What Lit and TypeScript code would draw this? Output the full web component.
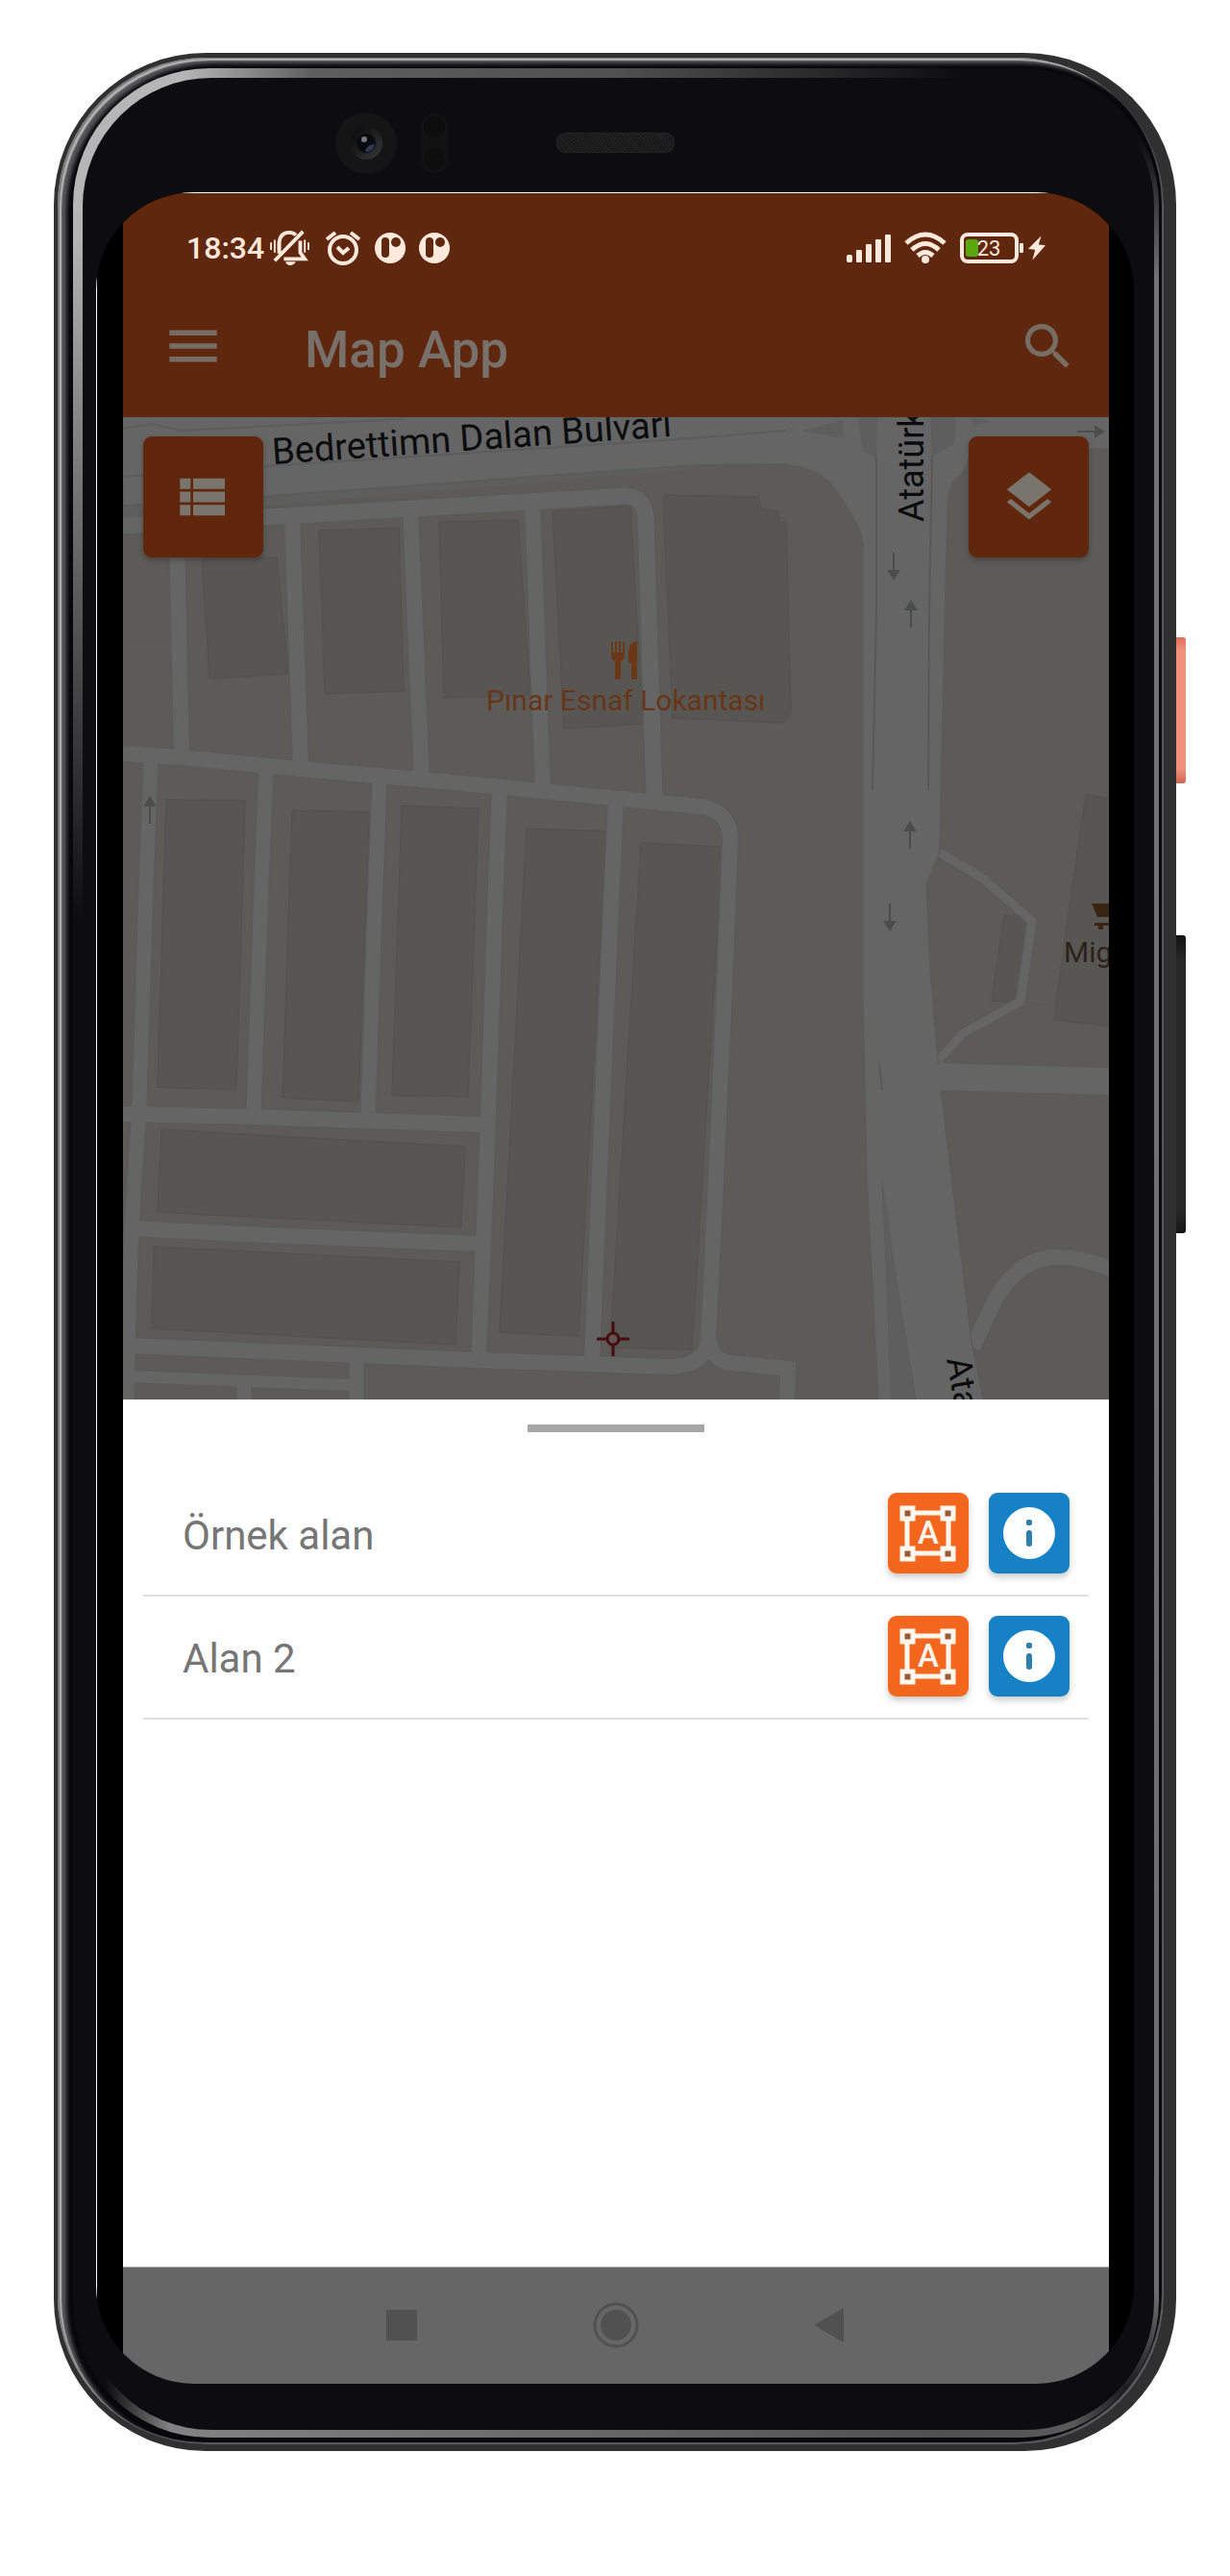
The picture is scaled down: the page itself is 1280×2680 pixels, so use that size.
import { LitElement, html, svg, css } from "lit";
import { customElement, property } from "lit/decorators.js";

/** Road centre lines, as [path, width]. */
const ROADS: [string, number][] = [
  ["M0 113L149 104L522 82Q542 82 544 104L553 398", 17],
  ["M56 120L61 354", 16],
  ["M176 104L185 366", 16],
  ["M299 96L311 377", 16],
  ["M426 88L437 389", 16],
  ["M0 350L61 354L185 366L311 377L437 389L600 405Q632 409 632 440L626 593L618 772L609 960Q607 986 570 988L367 981L7 966", 16],
  ["M609 955Q611 982 634 984L692 990L691 1030", 16],
  ["M29 358L24 486L17 715L9 843L6 930L4 1030", 15],
  ["M149 366L144 486L136 722", 15],
  ["M267 375L263 486L255 726", 15],
  ["M392 388L388 486L380 729L375 861L370 980", 16],
  ["M513 398L509 486L501 665L488 982", 16],
  ["M0 725L134 728L375 736", 16],
  ["M10 844L150 851L370 860", 16],
  ["M5 998L236 1007", 12],
  ["M243 980L243 1030", 15],
  ["M126 1008L126 1030", 15],
  ["M846 451L892 478L946 524L934 608L874 641L846 672", 9],
  ["M884 968L909 915Q932 880 960 875T1030 887", 16],
  ["M846 686L1030 691", 28],
];

const BLOCKS = [
  "82,146 160,146 172,267 90,272",
  "204,118 287,115 292,285 210,288",
  "329,109 411,107 424,289 334,292",
  "447,98 528,92 541,319 459,324",
  "562,81 661,83 664,95 682,98 683,109 690,110 695,306 688,318 572,313",
  "45,398 127,399 118,700 36,697",
  "176,409 256,411 245,712 166,708",
  "290,404 370,407 359,707 280,706",
  "420,428 503,431 474,956 392,952",
  "539,443 624,447 592,970 507,968",
  "40,741 356,759 352,843 36,827",
  "32,863 350,879 346,965 30,948",
  "1002,393 1030,397 1030,634 969,627 982,530",
  "917,518 946,522 933,609 904,607",
];

const ARROWS: [number, number, number][] = [
  [802, 155, 180],
  [820, 205, 0],
  [819, 435, 0],
  [798, 520, 180],
  [28, 409, 0],
  [1007, 15, 90],
];

@customElement("city-map")
class CityMap extends LitElement {
  static styles = css`
    :host {
      display: block;
    }
    svg {
      display: block;
      width: 100%;
      height: auto;
      font-family: Roboto, "Liberation Sans", sans-serif;
    }
    .land {
      fill: #5c5b58;
    }
    .block {
      fill: #575653;
      stroke: #545350;
      stroke-width: 1.5;
    }
    .casing {
      fill: none;
      stroke: #595a5a;
    }
    .road {
      fill: none;
      stroke: #656565;
    }
    .area {
      fill: #656565;
      stroke: #5a5b5b;
      stroke-width: 1.5;
    }
    .verge {
      fill: #5d5e5d;
    }
    .line {
      fill: none;
      stroke: #575858;
      stroke-width: 2;
    }
    .arrow {
      fill: #4b4c4c;
      stroke: #4b4c4c;
      stroke-width: 2;
    }
    .street {
      fill: #0b0c0d;
      font-size: 38px;
    }
    .avenue {
      fill: #0b0c0d;
      font-size: 36px;
    }
    .food {
      fill: #673618;
      font-size: 30px;
    }
    .shop {
      fill: #2b231b;
      font-size: 30px;
    }
  `;

  render() {
    return html`<svg viewBox="0 0 1026 1022" role="img" aria-label="Map">
      <rect class="land" width="1026" height="1022" />
      ${BLOCKS.map((b) => svg`<polygon class="block" points=${b} />`)}
      ${ROADS.map(([d, w]) => svg`<path class="casing" d=${d} stroke-width=${w + 3} />`)}
      ${ROADS.map(([d, w]) => svg`<path class="road" d=${d} stroke-width=${w} />`)}

      <path class="verge" d="M0 84L592 44V54L149 92L0 104Z" />
      <path
        class="area"
        d="M-2 -2H1028V33H882Q880 56 865 66Q858 80 858 96L852 353L850 453L836 486L840 575L847 657L852 707L883 961L896 1024H825L806 907L795 836L790 800L793 850L800 1024H786L774 790L770 611V133Q768 112 740 74Q725 50 679 49L592 50L149 82L0 92Z"
      />
      <rect x="836" y="674" width="18" height="25" fill="#656565" />
      <path class="verge" d="M765 0H785L784 42L770 36ZM840 0H867L865 28L842 41ZM706 14L749 3V22ZM884 0L904 5L884 9Z" />
      <path class="verge" d="M790 790L793 850L799 1022H825L806 907L797 836Z" />
      <path class="line" d="M0 12L30 7L60 14L290 2M0 62L150 51L592 22L690 14" opacity=".7" />
      <path class="line" d="M784 40V200L780 388M842 40L839 200L838 388M787 672L790 700" />
      <path class="line" d="M950 523L982 530M936 609L969 614M0 244H50" opacity=".5" />

      ${ARROWS.map(
        ([x, y, r]) => svg`<path class="arrow" transform="translate(${x} ${y}) rotate(${r})"
          d="M0 14V-6M-5 -5L0 -13L5 -5Z" />`,
      )}

      <text class="street" transform="translate(156 49) rotate(-4)">Bedrettimn Dalan Bulvarı</text>
      <text class="avenue" transform="translate(833 109) rotate(-90)">Atatürk</text>
      <text class="avenue" transform="translate(857 980) rotate(80)">Ata</text>

      <path
        fill="#6b3716"
        d="M508 234h2v11h2v-12h2v12h2v-12h2v12h2v-11h2v13q0 5-4 7v17q0 2-3 2t-3-2v-17q-4-2-4-7ZM535 233v38q0 2-3 2t-3-2v-15h-3v-11q0-11 9-12Z"
      />
      <text class="food" x="378" y="305">Pınar Esnaf Lokantası</text>

      <path
        fill="#3a2412"
        d="M1008 506h30v14h-24ZM1011 526h30v3h-30ZM1015 528h5v5h-5Z"
      />
      <text class="shop" x="979" y="567">Mig</text>

      <g fill="none" stroke="#470c10" stroke-width="3">
        <circle cx="510" cy="959" r="6" fill="#625454" />
        <path d="M510 941v12M510 965v12M493 959h11M516 959h11" />
      </g>
    </svg>`;
  }
}

@customElement("area-row")
class AreaRow extends LitElement {
  @property() name = "";

  static styles = css`
    :host {
      display: flex;
      align-items: center;
      gap: 21px;
      padding: 20px 20px 22px 41px;
      border-bottom: 2px solid #e0e0e0;
    }
    .name {
      flex: 1;
      padding-top: 6px;
      color: #767676;
      font-size: 42px;
      line-height: 48px;
    }
    button {
      display: block;
      width: 84px;
      height: 84px;
      padding: 0;
      border: 0;
      border-radius: 9px;
      box-shadow: 0 4px 6px rgba(0, 0, 0, 0.2);
    }
    svg {
      display: block;
      width: 100%;
      height: 100%;
    }
    .shape {
      background: #f3661e;
    }
    .info {
      background: #1681c4;
    }
    .glyph {
      fill: #fff6ee;
      font: 500 33px Roboto, sans-serif;
    }
  `;

  render() {
    return html`
      <span class="name">${this.name}</span>
      <button class="shape" aria-label="Show ${this.name}">
        <svg viewBox="0 0 84 84">
          <g fill="none" stroke="#fff6ee" stroke-width="5">
            <path d="M20 21H63V63H20Z" />
          </g>
          <g fill="#9a5a38" stroke="#fff6ee" stroke-width="5">
            <path d="M15 16h11v11h-11ZM57 16h11v11h-11ZM15 58h11v11h-11ZM57 58h11v11h-11Z" />
          </g>
          <text class="glyph" x="42" y="53" text-anchor="middle">A</text>
        </svg>
      </button>
      <button class="info" aria-label="About ${this.name}">
        <svg viewBox="0 0 84 84">
          <circle cx="42" cy="42" r="27" fill="#fdfffe" />
          <g fill="#2d7fab">
            <rect x="39" y="28" width="6" height="6" rx="2" />
            <rect x="39" y="39" width="6" height="17" rx="3" />
          </g>
        </svg>
      </button>
    `;
  }
}

@customElement("app-root")
class AppRoot extends LitElement {
  static styles = css`
    :host {
      display: flex;
      box-sizing: border-box;
      min-height: 100vh;
      padding: 55px 46px 130px 56px;
      background: #fff;
      font-family: Roboto, "Liberation Sans", sans-serif;
    }
    svg {
      display: block;
      flex: none;
    }
    button {
      padding: 0;
      border: 0;
      background: none;
      color: inherit;
    }

    /* handset shell, from the outside in */
    .shell {
      flex: 1;
      display: flex;
      padding: 5px 13px 7px 4px;
      border-radius: 158px;
      background: #303030;
    }
    .rim {
      flex: 1;
      display: flex;
      padding: 11px 5px 7px 16px;
      border-radius: 154px;
      background: #08080a;
      box-shadow:
        inset 2px 1px 0 #7c7c7c,
        inset 4px 3px 1px #b2b2b2,
        inset 9px 6px 4px #59595b,
        inset -2px -2px 1px #5c5d5e;
    }
    .ring {
      flex: 1;
      display: flex;
      padding: 10px 5px 8px 10px;
      border-radius: 142px;
      background:
        linear-gradient(90deg, #b6b6b6 0 10%, #5e5e5e 22%, #505050 50%, #0d0d0f 82%, transparent 90%) top / 100% 150px no-repeat,
        linear-gradient(90deg, #0d0d0f 3%, #828282 9%, #747474 30%, #505050 80%, #5a5a5a 92%, transparent 97%) bottom / 100% 150px no-repeat,
        linear-gradient(180deg, #b4b4b4 7%, #8a8a8a 14%, #0d0d0f 36%) left / 50% 100% no-repeat,
        linear-gradient(180deg, #0d0d0f 3%, #747474 9%, #6c6c6c 94%, #1c1c1e 98%) right / 50% 100% no-repeat;
    }
    .face {
      flex: 1;
      display: flex;
      flex-direction: column;
      padding: 0 21px 48px 14px;
      border-radius: 134px;
      background: #0d0d0f;
    }
    .sensors {
      display: grid;
      grid-template-columns: 1fr auto 1fr;
      align-items: center;
      height: 119px;
      box-sizing: border-box;
      padding-top: 16px;
    }
    .lenses {
      display: flex;
      align-items: center;
      justify-content: flex-end;
      gap: 25px;
      padding-right: 113px;
    }
    .speaker {
      width: 123px;
      height: 21px;
      border-radius: 9px;
      background: repeating-linear-gradient(45deg, #1a1a1a 0 2px, #222 2px 3px);
      box-shadow: inset 0 0 1px 1px #262626;
    }
    .glass {
      flex: 1;
      display: flex;
      overflow: hidden;
      padding: 1px 26px 0 28px;
      border-radius: 102px;
      background:
        linear-gradient(#fff, #fff) top / 100% 1px no-repeat,
        linear-gradient(#fff, #fff) left / 1px 100% no-repeat,
        #000;
    }
    .keys {
      display: flex;
      flex-direction: column;
      gap: 158px;
      width: 10px;
      padding-top: 608px;
    }
    .power,
    .volume {
      border-radius: 0 3px 3px 0;
    }
    .power {
      height: 152px;
      background: linear-gradient(#e0705a, #f0917b 9% 90%, #d0644e);
    }
    .volume {
      height: 310px;
      background: linear-gradient(#141414, #282828 9% 92%, #161616);
    }

    /* app */
    .app {
      flex: 1;
      min-width: 0;
      display: flex;
      flex-direction: column;
    }
    header {
      background: #5f270e;
    }
    .status {
      display: flex;
      align-items: center;
      justify-content: space-between;
      height: 114px;
      padding: 0 66px;
      color: #ffe9dd;
    }
    .group {
      display: flex;
      align-items: center;
      gap: 14px;
    }
    .tight {
      gap: 5px;
    }
    .time {
      font-size: 32px;
      font-weight: 500;
      line-height: 38px;
    }
    .bar {
      display: flex;
      align-items: center;
      height: 90px;
      padding: 0 32px 29px 40px;
      color: #776d64;
    }
    h1 {
      flex: 1;
      margin: 0 0 0 83px;
      padding-top: 8px;
      font-size: 53px;
      font-weight: 500;
      line-height: 60px;
      color: #77706b;
    }
    .map {
      position: relative;
    }
    .tool {
      position: absolute;
      top: 20px;
      display: grid;
      place-items: center;
      width: 125px;
      height: 126px;
      border-radius: 9px;
      background: #60270d;
      color: #7a756c;
      box-shadow: 0 3px 5px rgba(40, 30, 20, 0.35);
    }
    .list {
      left: 21px;
    }
    .layers {
      right: 21px;
    }
    .sheet {
      flex: 1;
      padding: 26px 21px;
      background: #fefefe;
    }
    .handle {
      width: 184px;
      height: 8px;
      margin: 0 auto 43px;
      background: #a6a6a6;
    }
    nav {
      display: flex;
      align-items: center;
      justify-content: center;
      gap: 159px;
      height: 122px;
      background: #666;
      box-shadow: inset 0 1px 0 #b5b5b5;
      color: #515151;
    }
  `;

  private badge() {
    return html`<svg width="32" height="34" viewBox="0 0 32 34">
      <ellipse cx="16" cy="17" rx="16" ry="16" fill="currentColor" />
      <rect x="7" y="6" width="8" height="21" rx="4" fill="#5f270e" />
      <circle cx="22" cy="11" r="5" fill="#5f270e" />
    </svg>`;
  }

  render() {
    return html`
      <div class="shell">
        <div class="rim">
          <div class="ring">
            <div class="face">
              <div class="sensors">
                <div class="lenses">
                  <svg width="64" height="64" viewBox="0 0 64 64">
                    <defs>
                      <linearGradient id="lens" x1="0" y1="0" x2="1" y2="1">
                        <stop offset=".2" stop-color="#101010" />
                        <stop offset="1" stop-color="#38393c" />
                      </linearGradient>
                    </defs>
                    <circle cx="32" cy="32" r="32" fill="#151515" />
                    <circle cx="32" cy="32" r="17" fill="url(#lens)" />
                    <circle cx="32" cy="32" r="10" fill="#0a0b10" />
                    <path d="M31 41Q33 33 41 33Q40 41 31 41Z" fill="#303a58" />
                    <circle cx="30" cy="28" r="3" fill="#77777b" />
                  </svg>
                  <svg width="28" height="62" viewBox="0 0 28 62">
                    <rect width="28" height="62" rx="14" fill="#121212" />
                    <circle cx="14" cy="14" r="11" fill="#0e0e0f" />
                    <circle cx="14" cy="48" r="11" fill="#0e0e0f" />
                  </svg>
                </div>
                <div class="speaker"></div>
              </div>
              <div class="glass">${this.app()}</div>
            </div>
          </div>
        </div>
      </div>
      <div class="keys">
        <div class="power"></div>
        <div class="volume"></div>
      </div>
    `;
  }

  private app() {
    return html`<div class="app">
      <header>
        <div class="status">
          <div class="group">
            <div class="group tight">
              <span class="time">18:34</span>
              <svg width="44" height="38" viewBox="0 0 46 40" fill="none" stroke="currentColor" stroke-width="4">
                <path d="M11 26V14Q12 3 22 3Q27 3 29 6M6 34L37 2M34 12V25L39 32H16" />
                <path d="M2 14v8M6 11v14M10 13v9M39 11v14M43 14v8" stroke-width="2" />
                <path d="M18 35h11q-2 4-6 4t-5-4Z" fill="currentColor" stroke="none" />
              </svg>
            </div>
            <svg width="38" height="38" viewBox="0 0 38 38" fill="none" stroke="currentColor" stroke-width="4">
              <circle cx="19" cy="21" r="14" />
              <path d="M2 10L11 3M36 10L27 3" />
              <path d="M13 18L19 24L25 19" />
            </svg>
            ${this.badge()} ${this.badge()}
          </div>
          <div class="group">
            <svg width="46" height="30" viewBox="0 0 46 30" fill="currentColor">
              <rect y="22" width="6" height="8" rx="2" />
              <rect x="10" y="17" width="6" height="13" rx="1" />
              <rect x="20" y="11" width="6" height="19" rx="1" />
              <rect x="30" y="6" width="6" height="24" rx="1" />
              <rect x="40" y="1" width="6" height="29" rx="1" />
            </svg>
            <svg width="44" height="34" viewBox="0 0 44 34" fill="none" stroke="currentColor" stroke-width="5">
              <path d="M2 12Q22 -6 42 12M8 19Q22 6 36 19M14 25Q22 18 30 25" />
              <circle cx="22" cy="29" r="4" fill="currentColor" stroke="none" />
            </svg>
            <div class="group tight">
              <svg width="66" height="32" viewBox="0 0 66 32">
                <rect x="2" y="2" width="57" height="28" rx="6" fill="none" stroke="currentColor" stroke-width="4" />
                <rect x="6" y="7" width="13" height="18" rx="3" fill="#5aa80e" />
                <rect x="62" y="11" width="4" height="10" rx="1" fill="currentColor" />
                <text x="30" y="24" text-anchor="middle" font-size="22" fill="currentColor">23</text>
              </svg>
              <svg width="18" height="28" viewBox="0 0 20 28" fill="currentColor">
                <path d="M15 0L0 15L8 16L5 28L20 11L12 10Z" />
              </svg>
            </div>
          </div>
        </div>
        <div class="bar">
          <button aria-label="Menu">
            <svg width="66" height="66" viewBox="0 0 24 24" fill="currentColor">
              <path d="M3 18h18v-2H3v2zm0-5h18v-2H3v2zm0-7v2h18V6H3z" />
            </svg>
          </button>
          <h1>Map App</h1>
          <button aria-label="Search">
            <svg width="63" height="63" viewBox="0 0 24 24" fill="currentColor">
              <path
                d="M15.5 14h-.79l-.28-.27A6.471 6.471 0 0 0 16 9.5 6.5 6.5 0 1 0 9.5 16c1.61 0 3.09-.59 4.23-1.57l.27.28v.79l5 4.99L20.49 19l-4.99-5zm-6 0C7.01 14 5 11.99 5 9.5S7.01 5 9.5 5 14 7.01 14 9.5 11.99 14 9.5 14z"
              />
            </svg>
          </button>
        </div>
      </header>
      <div class="map">
        <city-map></city-map>
        <button class="tool list" aria-label="List">
          <svg width="66" height="66" viewBox="0 0 24 24" fill="currentColor">
            <path
              d="M3 14h4v-4H3v4zm0 5h4v-4H3v4zM3 9h4V5H3v4zm5 5h12v-4H8v4zm0 5h12v-4H8v4zM8 5v4h12V5H8z"
            />
          </svg>
        </button>
        <button class="tool layers" aria-label="Layers">
          <svg width="62" height="62" viewBox="0 0 24 24" fill="currentColor">
            <path
              d="M11.99 18.54l-7.37-5.73L3 14.07l9 7 9-7-1.63-1.27-7.38 5.74zM12 16l7.36-5.73L21 9l-9-7-9 7 1.63 1.27L12 16z"
            />
          </svg>
        </button>
      </div>
      <section class="sheet">
        <div class="handle"></div>
        <area-row name="Örnek alan"></area-row>
        <area-row name="Alan 2"></area-row>
      </section>
      <nav>
        <button aria-label="Recent apps">
          <svg width="64" height="64" viewBox="0 0 64 64" fill="currentColor">
            <rect x="16" y="16" width="32" height="32" />
          </svg>
        </button>
        <button aria-label="Home">
          <svg width="64" height="64" viewBox="0 0 64 64" fill="currentColor">
            <circle cx="32" cy="32" r="16" />
            <circle cx="32" cy="32" r="22" fill="none" stroke="currentColor" stroke-width="3" />
          </svg>
        </button>
        <button aria-label="Back">
          <svg width="64" height="64" viewBox="0 0 64 64" fill="currentColor">
            <path d="M15 32L46 14V50Z" />
          </svg>
        </button>
      </nav>
    </div>`;
  }
}
